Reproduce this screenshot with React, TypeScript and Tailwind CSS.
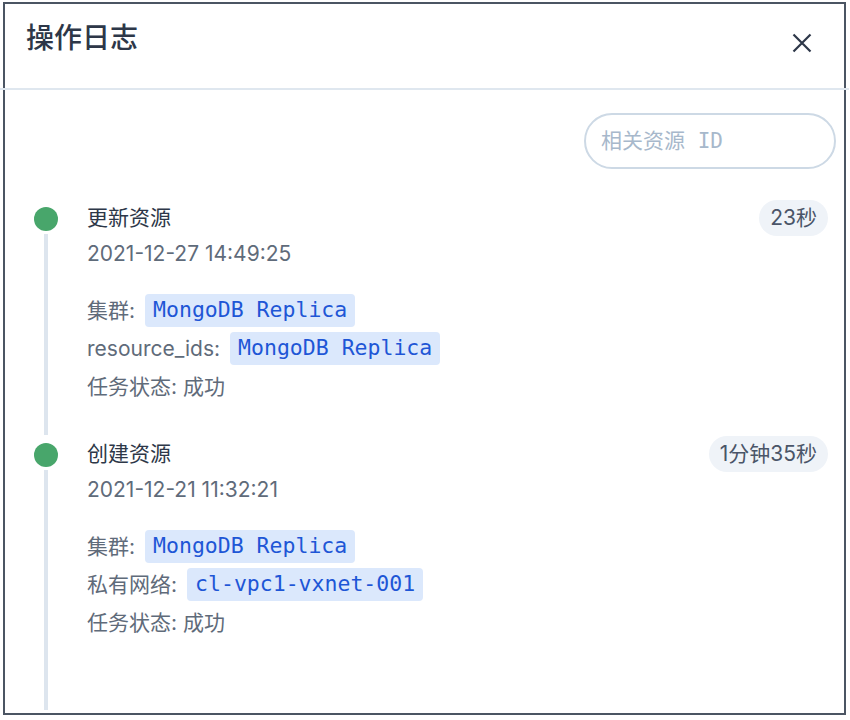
const entries = [
  {
    title: "更新资源",
    time: "2021-12-27 14:49:25",
    ago: "23秒",
    fields: [
      ["集群", "MongoDB Replica"],
      ["resource_ids", "MongoDB Replica"],
    ],
    status: "成功",
  },
  {
    title: "创建资源",
    time: "2021-12-21 11:32:21",
    ago: "1分钟35秒",
    fields: [
      ["集群", "MongoDB Replica"],
      ["私有网络", "cl-vpc1-vxnet-001"],
    ],
    status: "成功",
  },
];

export default function App() {
  return (
    <div className="w-[850px] h-[720px] bg-white pl-[3px] pt-[2px] font-['Inter','Noto_Sans_CJK_SC',sans-serif]">
      <div className="w-[843px] h-[713px] border-2 border-[#4b5563] flex flex-col">
        {/* Header */}
        <header className="-mx-[5px] h-[86px] shrink-0 border-b-2 border-[#dfe7ef] flex items-start justify-between pl-[26px] pr-[37px] pt-[15px]">
          <h1 className="text-[28px] leading-[38px] font-medium text-[#2d3748]">操作日志</h1>
          <button className="mt-[14px]">
            <svg width="20" height="20" viewBox="0 0 20 20" fill="none" stroke="#2d3748" strokeWidth="2.2">
              <path d="M1.5 1.5 18.5 18.5M18.5 1.5 1.5 18.5" />
            </svg>
          </button>
        </header>

        <div className="flex-1 flex flex-col pl-[29px] pr-[16px] pb-[3px]">
          {/* Search */}
          <div className="flex justify-end mt-[23px] -mr-[8px]">
            <input
              placeholder="相关资源 ID"
              className="w-[252px] h-[56px] rounded-full border-2 border-[#cdd9e5] pl-[15px] text-[21px] outline-none font-['DejaVu_Sans_Mono','Noto_Sans_CJK_SC',monospace] placeholder:text-[#a7b8cb]"
            />
          </div>

          {/* Timeline */}
          <div className="flex-1 flex flex-col mt-[31px]">
            {entries.map((item, index) => {
              const last = index === entries.length - 1;
              return (
                <div key={index} className={last ? "flex gap-[29px] flex-1" : "flex gap-[29px] pb-[33px]"}>
                  <div className="w-[24px] flex flex-col items-center">
                    <div className="mt-[7px] w-[24px] h-[24px] rounded-full bg-[#48a66b]" />
                    <div className={last ? "w-[4px] flex-1 mt-[3px] bg-[#dde5ee]" : "w-[4px] flex-1 mt-[3px] -mb-[32px] bg-[#dde5ee]"} />
                  </div>

                  <div className="flex-1">
                    <div className="flex justify-between items-center h-[36px]">
                      <span className="text-[21px] text-[#2d3748]">{item.title}</span>
                      <span className="h-[36px] px-[11px] flex items-center rounded-full bg-[#eff3f8] text-[21px] text-[#4a5568]">
                        {item.ago}
                      </span>
                    </div>
                    <p className="mt-[4px] text-[21px] leading-[28px] text-[#5f6b7a]">{item.time}</p>

                    <div className="mt-[26px] flex flex-col gap-[5px] text-[21px] text-[#5f6b7a]">
                      {item.fields.map(([label, value]) => (
                        <div key={label + value} className="flex items-center h-[33px] gap-[10px]">
                          <span>{label}:</span>
                          <span className="h-[33px] px-[8px] flex items-center rounded-[4px] bg-[#dbe8fc] text-[#1e56d6] text-[21.5px] font-['DejaVu_Sans_Mono',monospace]">
                            {value}
                          </span>
                        </div>
                      ))}
                      <div className="flex items-center h-[33px]">任务状态: {item.status}</div>
                    </div>
                  </div>
                </div>
              );
            })}
          </div>
        </div>
      </div>
    </div>
  );
}
